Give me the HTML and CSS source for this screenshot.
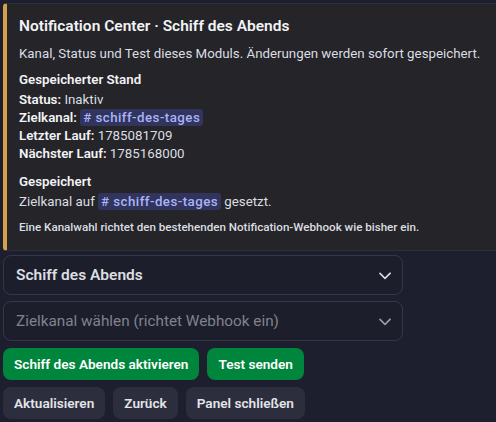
FILE: index.html
```html
<!DOCTYPE html>
<html lang="de">
<head>
    <meta charset="UTF-8">
    <title>Notification Center</title>
    <link rel="stylesheet" href="styles.css">
</head>
<body>
    <div class="embed">
        <div class="embed-title">Notification Center · Schiff des Abends</div>
        <div class="embed-desc">Kanal, Status und Test dieses Moduls. Änderungen werden sofort gespeichert.</div>

        <div class="field">
            <div class="field-name">Gespeicherter Stand</div>
            <div class="field-value">
                <div><b>Status:</b> Inaktiv</div>
                <div><b>Zielkanal:</b> <span class="mention"># schiff-des-tages</span></div>
                <div><b>Letzter Lauf:</b> 1785081709</div>
                <div><b>Nächster Lauf:</b> 1785168000</div>
            </div>
        </div>

        <div class="field">
            <div class="field-name">Gespeichert</div>
            <div class="field-value">Zielkanal auf <span class="mention"># schiff-des-tages</span> gesetzt.</div>
        </div>

        <div class="embed-footer">Eine Kanalwahl richtet den bestehenden Notification-Webhook wie bisher ein.</div>
    </div>

    <div class="components">
        <div class="select">
            <span class="select-value">Schiff des Abends</span>
            <svg class="chevron" viewBox="0 0 24 24"><path d="M5.3 9.3a1 1 0 0 1 1.4 0L12 14.6l5.3-5.3a1 1 0 1 1 1.4 1.4l-6 6a1 1 0 0 1-1.4 0l-6-6a1 1 0 0 1 0-1.4z"/></svg>
        </div>
        <div class="select">
            <span class="select-placeholder">Zielkanal wählen (richtet Webhook ein)</span>
            <svg class="chevron dim" viewBox="0 0 24 24"><path d="M5.3 9.3a1 1 0 0 1 1.4 0L12 14.6l5.3-5.3a1 1 0 1 1 1.4 1.4l-6 6a1 1 0 0 1-1.4 0l-6-6a1 1 0 0 1 0-1.4z"/></svg>
        </div>

        <div class="btn-row">
            <button class="btn success">Schiff des Abends aktivieren</button>
            <button class="btn success">Test senden</button>
        </div>
        <div class="btn-row">
            <button class="btn secondary">Aktualisieren</button>
            <button class="btn secondary">Zurück</button>
            <button class="btn secondary">Panel schließen</button>
        </div>
    </div>
</body>
</html>
```

FILE: styles.css
```css
* {
    margin: 0;
    padding: 0;
    box-sizing: border-box;
}

body {
    font-family: Roboto, 'Noto Sans', sans-serif;
    background: #1e1f2e;
    color: #dbdee1;
    padding: 3px;
    overflow: hidden;
    width: 496px;
    height: 422px;
}

.embed {
    width: 520px;
    background: #242429;
    border: 1px solid #2e2f38;
    border-left: 4px solid #d2a24c;
    border-radius: 4px;
    padding: 11px 16px 15px 12px;
}

.embed-title {
    font-size: 15.5px;
    font-weight: 600;
    color: #f2f3f5;
    line-height: 22px;
}

.embed-desc {
    font-size: 13.3px;
    line-height: 18px;
    margin-top: 8px;
    color: #dbdee1;
    white-space: nowrap;
}

.field {
    margin-top: 8px;
    font-size: 13.3px;
    line-height: 18px;
}

.field-name {
    font-weight: 600;
    color: #f2f3f5;
    margin-bottom: 2px;
}

.field-value b {
    font-weight: 600;
    color: #f2f3f5;
}

.field + .field {
    margin-top: 10px;
}

.mention {
    background: rgba(88, 101, 242, 0.26);
    color: #a9b3f6;
    border-radius: 3px;
    padding: 1px 3px;
    letter-spacing: 0.45px;
    font-weight: 500;
}

.embed-footer {
    margin-top: 8px;
    font-size: 11.6px;
    font-weight: 500;
    line-height: 16px;
    color: #dbdee1;
    white-space: nowrap;
}

.components {
    display: flex;
    flex-direction: column;
    gap: 6px;
    margin-top: 4px;
}

.select {
    width: 400px;
    height: 40px;
    border: 1px solid #35364a;
    border-radius: 8px;
    background: #1d1e2c;
    display: flex;
    align-items: center;
    justify-content: space-between;
    padding: 0 7px 0 12px;
    font-size: 15.3px;
}

.select-value {
    font-size: 15.5px;
    font-weight: 600;
    color: #dbdee1;
}

.select-placeholder {
    color: #80828e;
}

.chevron {
    width: 20px;
    height: 20px;
    fill: #dbdee1;
}

.chevron.dim {
    fill: #9a9ca6;
}

.btn-row {
    display: flex;
    gap: 8px;
    margin-top: 1px;
}

.btn {
    height: 32px;
    border: none;
    border-radius: 8px;
    padding: 0 11px;
    font-family: inherit;
    font-size: 13.6px;
    font-weight: 600;
    color: #ffffff;
}

.btn.success {
    background: #00853c;
}

.btn.secondary {
    background: #2d2e3d;
    color: #e3e5e8;
}
```
